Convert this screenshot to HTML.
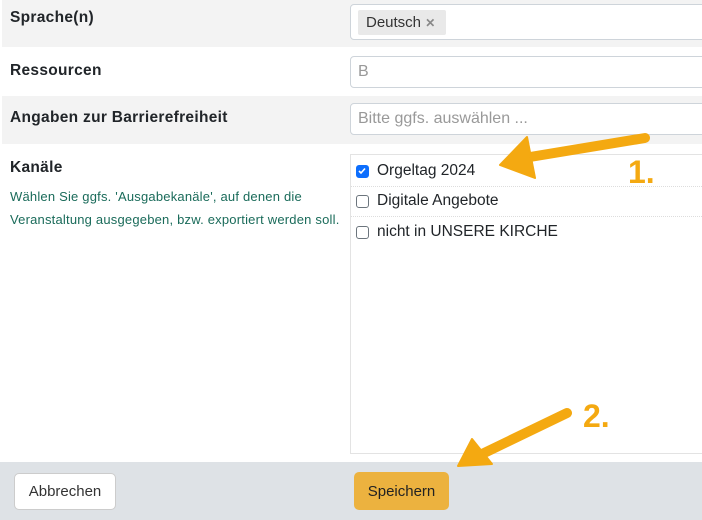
<!DOCTYPE html>
<html><head><style>
body{margin:0;width:702px;height:520px;overflow:hidden;font-family:"Liberation Sans",sans-serif;background:#fff;position:relative;color:#212529}
.row{position:absolute;left:2px;right:0}
.lbl{position:absolute;left:10px;font-weight:bold;font-size:15.5px;letter-spacing:0.3px}
.inp{position:absolute;left:350px;width:360px;border:1px solid #ced4da;border-radius:4px;background:#fff;box-sizing:border-box;font-size:16px;color:#999}
.cb{position:absolute;left:356px;width:13px;height:13px;border:1.5px solid #6c757d;border-radius:3px;box-sizing:border-box}
.it{position:absolute;left:377px;font-size:15.5px;color:#212529}
.sep{position:absolute;left:351px;right:0;border-top:1px dotted #ddd}
</style></head><body>
<div class="row" style="top:0;height:47px;background:#f3f3f3"></div>
<div class="row" style="top:96px;height:48px;background:#f3f3f3"></div>
<div class="lbl" style="top:9px">Sprache(n)</div>
<div class="lbl" style="top:62px">Ressourcen</div>
<div class="lbl" style="top:109px">Angaben zur Barrierefreiheit</div>
<div class="lbl" style="top:159px">Kanäle</div>
<div style="position:absolute;left:10px;top:185px;font-size:13px;line-height:23px;color:#1a6b5a;letter-spacing:0.2px">Wählen Sie ggfs. 'Ausgabekanäle', auf denen die<br>Veranstaltung ausgegeben, bzw. exportiert werden soll.</div>
<div class="inp" style="top:4px;height:36px"><span style="position:absolute;left:7px;top:5px;height:25px;width:88px;background:#e9e9e9;border-radius:2px;color:#333;font-size:15px;line-height:25px;padding-left:8px;box-sizing:border-box">Deutsch <span style="color:#888;font-size:12px;font-weight:bold">✕</span></span></div>
<div class="inp" style="top:56px;height:32px;padding:6px 7px">B</div>
<div class="inp" style="top:103px;height:32px;padding:6px 7px">Bitte ggfs. auswählen ...</div>
<div style="position:absolute;left:350px;top:154px;width:360px;height:300px;border:1px solid #e3e3e3;box-sizing:border-box"></div>
<div class="cb" style="top:165px;background:#0d6efd;border-color:#0d6efd"><svg width="10" height="10" viewBox="0 0 10 10" style="position:absolute;left:0;top:0"><path d="M2 5l2 2 4-4.5" stroke="#fff" stroke-width="1.6" fill="none"/></svg></div>
<div class="it" style="top:162px">Orgeltag 2024</div>
<div class="sep" style="top:186px"></div>
<div class="cb" style="top:195px"></div>
<div class="it" style="top:192px">Digitale Angebote</div>
<div class="sep" style="top:216px"></div>
<div class="cb" style="top:226px"></div>
<div class="it" style="top:223px">nicht in UNSERE KIRCHE</div>
<div style="position:absolute;left:0;top:462px;width:702px;height:58px;background:#dee2e6"></div>
<div style="position:absolute;left:14px;top:473px;width:102px;height:37px;background:#fff;border:1px solid #ccc;border-radius:5px;box-sizing:border-box;font-size:15px;line-height:35px;text-align:center;color:#333">Abbrechen</div>
<div style="position:absolute;left:354px;top:472px;width:95px;height:38px;background:#ecb23f;border-radius:5px;font-size:15px;line-height:40px;text-align:center;color:#222">Speichern</div>
<svg width="702" height="520" style="position:absolute;left:0;top:0">
<g stroke="#f4a911" fill="#f4a911">
<path d="M645 138 L530 157" stroke-width="10" stroke-linecap="round"/>
<path d="M500 165 L527 137 L535 178 Z" stroke-width="2" stroke-linejoin="round"/>
<path d="M567 413 L480 455" stroke-width="10" stroke-linecap="round"/>
<path d="M458 466 L472 439 L492 464 Z" stroke-width="2" stroke-linejoin="round"/>
</g>
<g font-family="Liberation Sans" font-weight="bold" font-size="32" fill="#f4a911" stroke="#fff" stroke-width="3" paint-order="stroke">
<text x="628" y="183">1.</text>
<text x="583" y="427">2.</text>
</g>
</svg>
</body></html>
